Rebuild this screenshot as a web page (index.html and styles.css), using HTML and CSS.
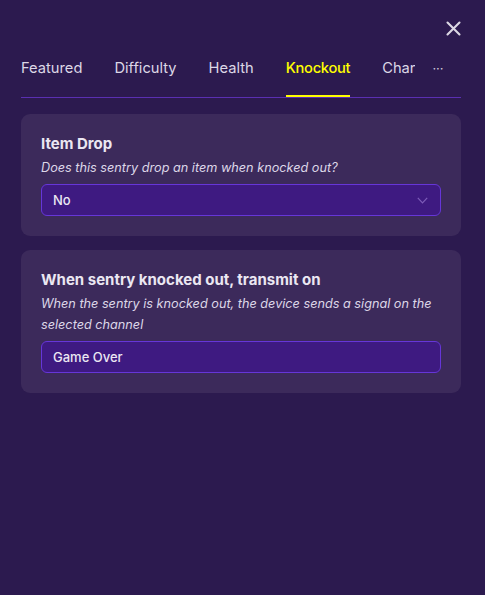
FILE: index.html
```html
<!DOCTYPE html>
<html>
<head>
<meta charset="utf-8">
<link rel="stylesheet" href="styles.css">
</head>
<body>
<div class="panel">
  <div class="topbar">
    <button class="close" aria-label="Close">
      <svg width="15" height="15" viewBox="0 0 15 15"><path d="M1.5 1.5 L13.5 13.5 M13.5 1.5 L1.5 13.5" stroke="#dcd8e4" stroke-width="2.1" stroke-linecap="round"/></svg>
    </button>
  </div>
  <div class="tabs">
    <div class="tablist">
      <div class="tab">Featured</div>
      <div class="tab">Difficulty</div>
      <div class="tab">Health</div>
      <div class="tab active">Knockout</div>
      <div class="tab">Channels</div>
    </div>
    <div class="more">···</div>
  </div>
  <div class="cards">
    <div class="card">
      <div class="title">Item Drop</div>
      <div class="desc">Does this sentry drop an item when knocked out?</div>
      <div class="field select">
        <span>No</span>
        <svg class="chev" width="11" height="7" viewBox="0 0 11 7"><path d="M0.8 0.8 L5.5 5.8 L10.2 0.8" fill="none" stroke="#7d5cb8" stroke-width="1.2"/></svg>
      </div>
    </div>
    <div class="card">
      <div class="title">When sentry knocked out, transmit on</div>
      <div class="desc">When the sentry is knocked out, the device sends a signal on the selected channel</div>
      <div class="field">
        <span>Game Over</span>
      </div>
    </div>
  </div>
</div>
</body>
</html>
```

FILE: styles.css
```css
html, body {
  margin: 0;
  padding: 0;
  background: #2c1a4f;
  font-family: Inter, "Noto Sans", sans-serif;
  color: #ebe7f2;
}
.panel {
  width: 485px;
  height: 595px;
  box-sizing: border-box;
  padding: 0 24px 0 21px;
}
.topbar {
  display: flex;
  justify-content: flex-end;
  padding-top: 21px;
  height: 15px;
}
.close {
  background: none;
  border: 0;
  padding: 0;
  margin: 0;
  width: 15px;
  height: 15px;
  display: block;
  cursor: pointer;
}
.close svg { display: block; }
.tabs {
  margin-top: 22px;
  display: flex;
  border-bottom: 1px solid #5a2fb2;
  height: 39px;
}
.tablist {
  width: 394px;
  overflow: hidden;
  display: flex;
  gap: 32px;
  white-space: nowrap;
}
.tab {
  position: relative;
  font-size: 14.7px;
  line-height: 20px;
  font-weight: 400;
  color: #dcd7e6;
  flex: none;
}
.tab.active {
  color: #ffff00;
  font-weight: 500;
  letter-spacing: -0.3px;
}
.tab.active::after {
  content: "";
  position: absolute;
  left: 0;
  right: 0;
  top: 37px;
  height: 3px;
  background: #ffff00;
}
.more {
  flex: 1;
  text-align: center;
  font-size: 13px;
  line-height: 20px;
  color: #cfc9da;
}
.cards {
  margin-top: 16px;
  display: flex;
  flex-direction: column;
  gap: 14px;
}
.card {
  background: #3c2a5b;
  border-radius: 9px;
  padding: 20px;
}
.title {
  font-size: 15px;
  line-height: 20px;
  font-weight: 700;
  color: #ebe7f2;
}
.desc {
  margin-top: 3px;
  font-size: 12.7px;
  line-height: 21px;
  font-style: italic;
  color: #ddd7e8;
}
.field {
  margin-top: 6px;
  height: 32px;
  box-sizing: border-box;
  border: 1px solid #6636d8;
  border-radius: 6px;
  background: #3e1a81;
  display: flex;
  align-items: center;
  justify-content: space-between;
  padding: 0 12px 0 11px;
  font-size: 13px;
  font-weight: 500;
  color: #ebe7f2;
}
.chev { display: block; }
```
